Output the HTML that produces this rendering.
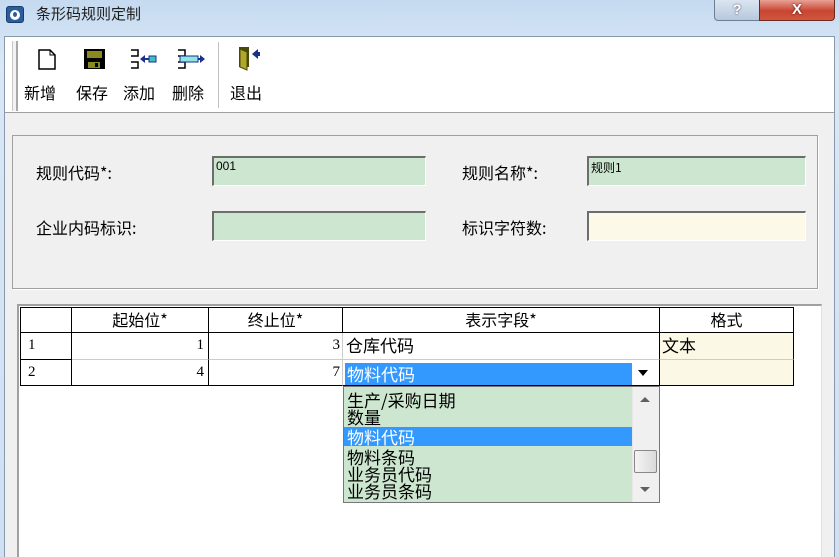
<!DOCTYPE html>
<html><head><meta charset="utf-8"><style>
*{margin:0;padding:0;box-sizing:border-box}
body{width:839px;height:557px;overflow:hidden;position:relative;background:#f0f0f0;font-family:"Liberation Sans","Noto Sans CJK SC",sans-serif;color:#000}
.a{position:absolute}
.cj{font-family:"Noto Sans CJK SC","WenQuanYi Zen Hei",sans-serif}
.lbl{font-size:16px;line-height:20px;white-space:nowrap}
.inp{position:absolute;border-top:2px solid #6d6d6d;border-left:2px solid #6d6d6d;border-right:1px solid #fff;border-bottom:1px solid #fff;background:#cde6cf;font-size:12px;padding:1px 2px}
.cell{position:absolute;border-right:1px solid #000;border-bottom:1px solid #000;font-size:15px;line-height:24px;white-space:nowrap;overflow:hidden}
.li{font-size:17px;line-height:17px;height:17px;padding-left:3px;white-space:nowrap}
</style></head><body>
<div class="a" style="left:0;top:0;width:839px;height:557px;background:linear-gradient(#c5daf0,#d9e7f6 60px,#cfe0f3);"></div>
<div class="a" style="left:4px;top:36px;width:831px;height:521px;background:#f0f0f0;border:1px solid #8898ad;border-bottom:none"></div>
<div class="a" style="left:6px;top:6px;width:18px;height:17px;background:#2b5d9c;border-radius:3px;border:1px solid #1a3d70"></div>
<div class="a" style="left:10px;top:10px;width:10px;height:10px;border-radius:50%;background:#fff"></div>
<div class="a" style="left:13px;top:12px;width:4px;height:5px;border-radius:50%;background:#2b5d9c"></div>
<div class="a cj" style="left:36px;top:4px;font-size:15px;line-height:20px;color:#1e1e1e">条形码规则定制</div>
<div class="a" style="left:714px;top:0;width:46px;height:21px;border:1px solid #6f7f93;border-top:none;border-radius:0 0 0 4px;background:linear-gradient(#dbe5f1,#b7c8dc);color:#fff;font-weight:bold;text-align:center;font-size:14px;line-height:18px;text-shadow:0 0 2px #445">?</div>
<div class="a" style="left:759px;top:0;width:76px;height:21px;border:1px solid #6a2a22;border-top:none;border-radius:0 0 4px 0;background:linear-gradient(#e8a195,#c84532 55%,#d0573f);color:#fff;font-weight:bold;text-align:center;font-size:15px;line-height:19px;text-shadow:0 0 2px #400">X</div>
<div class="a" style="left:5px;top:37px;width:829px;height:76px;background:#fff;border-bottom:1px solid #a0a0a0"></div>
<div class="a" style="left:12px;top:41px;width:6px;height:70px;border-left:1px solid #c8c8c8;border-right:2px solid #a8a8a8;background:#f2f2f2"></div>
<div class="a" style="left:218px;top:42px;width:1px;height:66px;background:#c0c0c0"></div>
<svg class="a" style="left:0;top:0" width="300" height="80">
<path d="M39 50h11l5 5v14h-16z" fill="#fff" stroke="#000" stroke-width="1.5"/><path d="M50 50v5h5" fill="none" stroke="#000"/>
<rect x="84" y="49" width="21" height="20" fill="#000"/><rect x="87" y="51" width="15" height="7" fill="#8a8a20"/><rect x="88" y="62" width="12" height="6" fill="#8a8a20"/><rect x="95" y="63" width="3" height="4" fill="#000"/>
<path d="M131 50h7v6h-7M131 62h7v6h-7" fill="none" stroke="#000" stroke-width="1.5"/><path d="M142 59h10" stroke="#1a2f8f" stroke-width="2"/><path d="M140 59l5-4v8z" fill="#1a2f8f"/><rect x="149" y="56" width="7" height="6" fill="#3cc0c0" stroke="#1a2f8f"/>
<path d="M178 50h7v6h-7M178 62h7v6h-7" fill="none" stroke="#000" stroke-width="1.5"/><rect x="180" y="56" width="18" height="6" fill="#8fe4e4" stroke="#1a2f8f"/><path d="M198 59h3" stroke="#1a2f8f" stroke-width="2"/><path d="M205 59l-5-4v8z" fill="#1a2f8f"/>
<rect x="239" y="47" width="10" height="20" fill="#4a4a08"/><path d="M240 49l7 3v18l-7-3z" fill="#b1a72a" stroke="#4a4a08"/><path d="M252 54l6-5v10z" fill="#1a2f8f"/><rect x="256" y="52" width="4" height="4" fill="#1a2f8f"/>
</svg>
<div class="a cj lbl" style="left:24px;top:82px">新增</div>
<div class="a cj lbl" style="left:76px;top:82px">保存</div>
<div class="a cj lbl" style="left:123px;top:82px">添加</div>
<div class="a cj lbl" style="left:172px;top:82px">删除</div>
<div class="a cj lbl" style="left:230px;top:82px">退出</div>
<div class="a" style="left:12px;top:135px;width:806px;height:154px;border:1px solid #a0a0a0;box-shadow:1px 1px 0 #fff"></div>
<div class="a cj lbl" style="left:36px;top:162px">规则代码*:</div>
<div class="inp" style="left:212px;top:156px;width:214px;height:30px">001</div>
<div class="a cj lbl" style="left:462px;top:162px">规则名称*:</div>
<div class="inp cj" style="left:587px;top:156px;width:219px;height:30px">规则1</div>
<div class="a cj lbl" style="left:36px;top:217px">企业内码标识:</div>
<div class="inp" style="left:212px;top:211px;width:214px;height:30px"></div>
<div class="a cj lbl" style="left:462px;top:217px">标识字符数:</div>
<div class="inp" style="left:587px;top:211px;width:219px;height:30px;background:#fdf9e8"></div>
<div class="a" style="left:17px;top:304px;width:805px;height:253px;background:#fff;border-top:2px solid #a0a0a0;border-left:2px solid #a0a0a0;border-right:1px solid #e0e0e0"></div>
<div class="a" style="left:20px;top:307px;width:774px;height:79px;border-top:1px solid #000;border-left:1px solid #000"></div>
<div class="cell cj" style="left:20px;top:307px;width:52px;height:26px"></div>
<div class="cell cj" style="left:72px;top:307px;width:137px;height:26px;text-align:center;font-size:16px">起始位*</div>
<div class="cell cj" style="left:209px;top:307px;width:134px;height:26px;text-align:center;font-size:16px">终止位*</div>
<div class="cell cj" style="left:343px;top:307px;width:317px;height:26px;text-align:center;font-size:16px">表示字段*</div>
<div class="cell cj" style="left:660px;top:307px;width:134px;height:26px;text-align:center;font-size:16px">格式</div>
<div class="cell" style="left:20px;top:333px;width:52px;height:27px;padding-left:8px;font-family:'Liberation Serif',serif">1</div>
<div class="cell" style="left:72px;top:333px;width:137px;height:27px;text-align:right;padding-right:4px;font-family:'Liberation Serif',serif;border-bottom-color:#ccc">1</div>
<div class="cell" style="left:209px;top:333px;width:134px;height:27px;text-align:right;padding-right:2px;font-family:'Liberation Serif',serif;border-right-color:#ccc;border-bottom-color:#ccc">3</div>
<div class="cell cj" style="left:343px;top:333px;width:317px;height:27px;padding-left:3px;font-size:17px;border-bottom-color:#ccc">仓库代码</div>
<div class="cell cj" style="left:660px;top:333px;width:134px;height:27px;background:#fcf8e6;padding-left:2px;font-size:17px;border-bottom-color:#ccc">文本</div>
<div class="cell" style="left:20px;top:360px;width:52px;height:26px;padding-left:8px;font-family:'Liberation Serif',serif">2</div>
<div class="cell" style="left:72px;top:360px;width:137px;height:26px;text-align:right;padding-right:4px;font-family:'Liberation Serif',serif">4</div>
<div class="cell" style="left:209px;top:360px;width:134px;height:26px;text-align:right;padding-right:2px;font-family:'Liberation Serif',serif;border-right-color:#ccc">7</div>
<div class="cell" style="left:343px;top:360px;width:317px;height:26px;background:#fff"></div>
<div class="cell" style="left:660px;top:360px;width:134px;height:26px;background:#fcf8e6"></div>
<div class="a cj" style="left:345px;top:363px;width:287px;height:22px;background:#3399ff;color:#fff;font-size:17px;line-height:22px;padding-left:2px">物料代码</div>
<svg class="a" style="left:637px;top:369px" width="12" height="8"><path d="M1 1h10l-5 6z" fill="#000"/></svg>
<div class="a" style="left:343px;top:386px;width:317px;height:117px;background:#cde6cf;border:1px solid #777;overflow:hidden;padding-top:4px">
<div class="li cj">生产/采购日期</div>
<div class="li cj">数量</div>
<div class="li cj" style="background:#3399ff;color:#fff;width:288px;height:19px;line-height:19px;margin:2px 0">物料代码</div>
<div class="li cj">物料条码</div>
<div class="li cj">业务员代码</div>
<div class="li cj">业务员条码</div>
</div>
<div class="a" style="left:632px;top:387px;width:27px;height:115px;background:#f0f0f0;border-left:1px solid #e8e8e8"></div>
<svg class="a" style="left:640px;top:397px" width="10" height="6"><path d="M0 5l5-5 5 5z" fill="#606060"/></svg>
<svg class="a" style="left:640px;top:487px" width="10" height="6"><path d="M0 0l5 5 5-5z" fill="#606060"/></svg>
<div class="a" style="left:634px;top:450px;width:23px;height:23px;border:1px solid #888;border-radius:2px;background:linear-gradient(90deg,#f4f4f4,#dadada)"></div>
</body></html>
